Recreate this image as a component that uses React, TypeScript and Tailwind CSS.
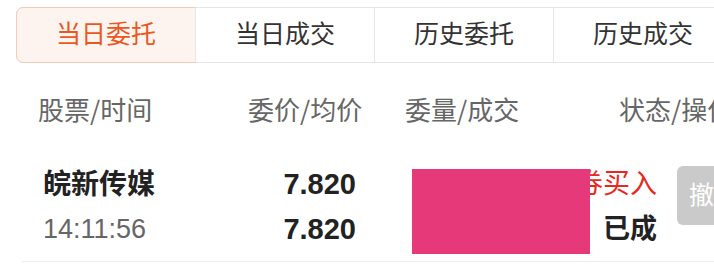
export default function App() {
  const tabs = ["当日委托", "当日成交", "历史委托", "历史成交"];
  const font = { fontFamily: '"Liberation Sans", "Noto Sans CJK SC", sans-serif' };
  const cjk = { fontFamily: '"Noto Sans CJK SC", sans-serif' };

  return (
    <div className="relative h-[279px] w-[714px] overflow-hidden bg-white" style={font}>
      {/* Tabs */}
      <div className="ml-[16px] mt-[7px] flex h-[56px] w-[716px] rounded-l-[7px] border border-[#e6e6e6]">
        {tabs.map((t, i) => (
          <div
            key={t}
            className={
              i === 0
                ? "-m-px flex h-[56px] w-[180px] shrink-0 items-center justify-center rounded-l-[7px] border border-[#f3cbb9] bg-[#fdf3ef] text-[25px] text-[#e9581f]"
                : "flex w-[179px] shrink-0 items-center justify-center border-l border-[#e6e6e6] text-[25px] text-[#333]"
            }
          >
            {t}
          </div>
        ))}
      </div>

      {/* Header */}
      <div className="flex h-[90px] items-center whitespace-nowrap text-[26px] text-[#666]" style={cjk}>
        <div className="w-[248px] shrink-0 pl-[38px]">股票/时间</div>
        <div className="w-[157px] shrink-0">委价/均价</div>
        <div className="w-[214px] shrink-0">委量/成交</div>
        <div className="shrink-0">状态/操作</div>
      </div>

      {/* Row */}
      <div className="flex pt-[9px]">
        <div className="w-[248px] shrink-0 pl-[43px]">
          <div className="flex h-[45px] items-center text-[28px] font-bold text-[#222]">皖新传媒</div>
          <div className="flex h-[45px] items-center text-[27px] text-[#666]">14:11:56</div>
        </div>
        <div className="w-[108px] shrink-0 text-right text-[29px] font-bold text-[#222]">
          <div className="flex h-[45px] items-center justify-end">7.820</div>
          <div className="flex h-[45px] items-center justify-end">7.820</div>
        </div>
        <div className="relative w-[301px] shrink-0 text-right">
          <div className="flex h-[45px] items-center justify-end text-[27px] text-[#e8281c]">证券买入</div>
          <div className="flex h-[45px] items-center justify-end text-[27px] font-bold text-[#222]">已成</div>
          <div className="absolute left-[56px] top-[7px] h-[85px] w-[178px] bg-[#e6397a]" />
        </div>
        <div className="ml-[20px] mt-[4px] flex h-[59px] w-[74px] shrink-0 items-center justify-center rounded-[6px] bg-[#cacaca] text-[25px] text-white">
          撤单
        </div>
      </div>
      <div className="ml-[22px] mt-[9px] h-px bg-[#ececec]" />
    </div>
  );
}
